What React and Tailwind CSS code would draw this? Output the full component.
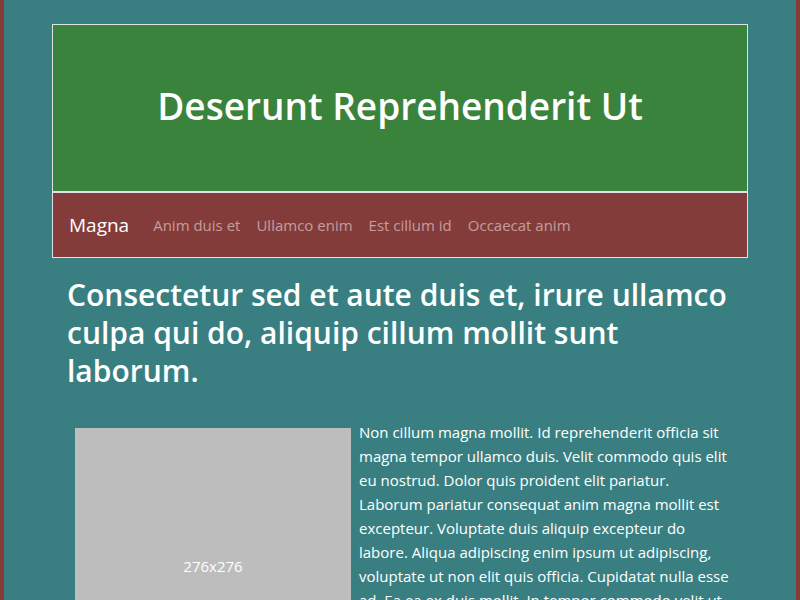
const links = ["Anim duis et", "Ullamco enim", "Est cillum id", "Occaecat anim"];

export default function App() {
  return (
    <div className="min-h-screen border-x-4 border-[#843c3a] bg-[#397f82] px-12 pt-6 font-['Open_Sans','Noto_Sans',sans-serif] text-[15px] leading-6 text-white">
      <header className="border border-[#dee2e6] bg-[#39833c] px-4 pt-[58px] pb-[62px] text-center">
        <h1 className="text-[37px] leading-[46px] font-semibold">Deserunt Reprehenderit Ut</h1>
      </header>
      <nav className="flex items-center border border-[#dee2e6] bg-[#843c3a] px-4 py-3">
        <a href="#" className="mr-4 text-[19px] leading-10">Magna</a>
        <ul className="flex">
          {links.map((label) => (
            <li key={label}>
              <a href="#" className="px-2 text-white/50">{label}</a>
            </li>
          ))}
        </ul>
      </nav>
      <main className="px-[15px] pt-[18px]">
        <h2 className="text-[30px] leading-[38px] font-semibold">
          Consectetur sed et aute duis et, irure ullamco culpa qui do, aliquip cillum mollit sunt laborum.
        </h2>
        <div className="mt-[30px] flex">
          <div className="m-2 flex size-[276px] shrink-0 items-center justify-center bg-[#bdbdbd]">
            276x276
          </div>
          <p>
            Non cillum magna mollit. Id reprehenderit officia sit magna tempor ullamco duis. Velit
            commodo quis elit eu nostrud. Dolor quis proident elit pariatur. Laborum pariatur
            consequat anim magna mollit est excepteur. Voluptate duis aliquip excepteur do labore.
            Aliqua adipiscing enim ipsum ut adipiscing, voluptate ut non elit quis officia. Cupidatat
            nulla esse ad. Ea ea ex duis mollit. In tempor commodo velit ut
          </p>
        </div>
      </main>
    </div>
  );
}
